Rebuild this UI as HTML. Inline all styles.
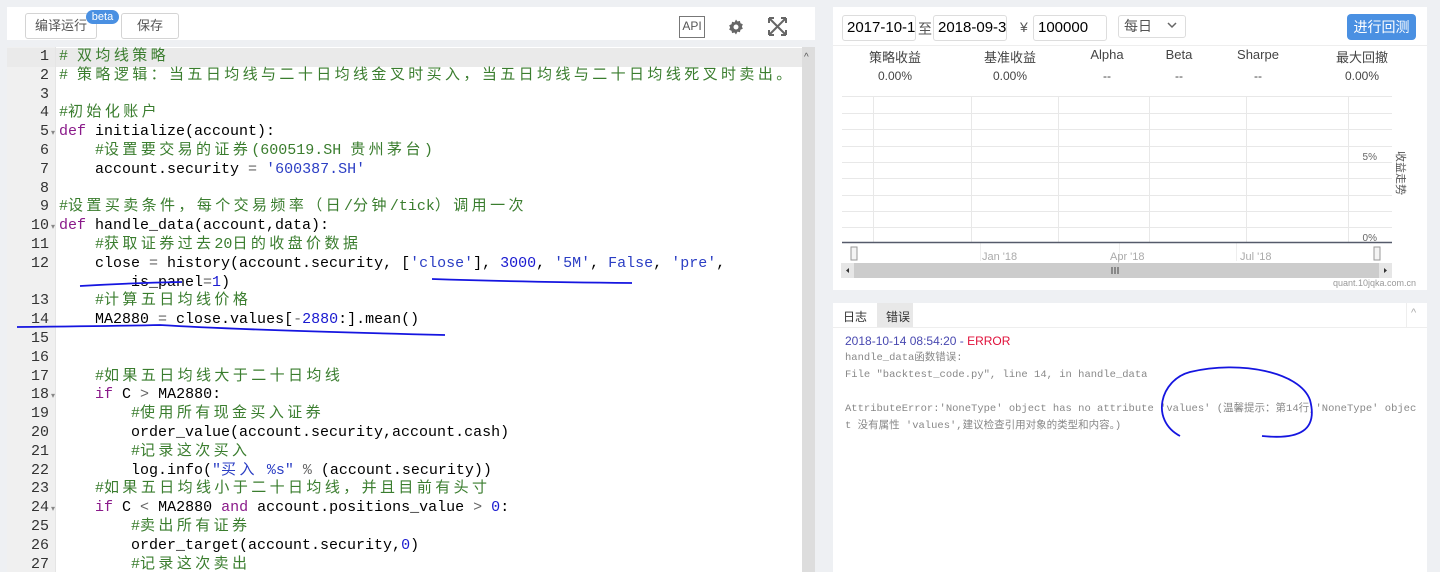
<!DOCTYPE html>
<html><head><meta charset="utf-8"><style>
*{margin:0;padding:0;box-sizing:border-box}
body{width:1440px;height:572px;background:#eef0f3;position:relative;overflow:hidden;font-family:"Liberation Sans","Noto Sans CJK SC",sans-serif}
.a{position:absolute}
.btn{position:absolute;top:13px;height:26px;border:1px solid #d4d4d4;border-radius:3px;background:#fff;font-size:13px;color:#555;text-align:center;line-height:24px;white-space:nowrap}
#ed{position:absolute;left:7px;top:47px;width:808px;height:525px;background:#fff;overflow:hidden}
#gut{position:absolute;left:0;top:0;width:48px;height:525px;background:#f0f0f0}
.ln{position:absolute;left:0;width:42px;text-align:right;font:15px/18.8px "Liberation Mono",monospace;color:#333;height:18.8px}
.cl{position:absolute;left:52px;font:15px/18.8px "Liberation Mono","Noto Sans CJK SC",monospace;color:#000;white-space:pre;height:18.8px}
.cl span{line-height:18.8px}
.c{color:#3a7d2e}.k{color:#8a1a8a}.s{color:#2b3ec4}.n{color:#1a1ad0}.o{color:#666}
.z{letter-spacing:3.4px;font-size:15px}
.fold{position:absolute;left:44px;font-size:8px;color:#888}
</style></head><body>
<div class="a" style="left:7px;top:7px;width:808px;height:33px;background:#fff"></div>
<div class="btn" style="left:25px;width:72px">编译运行</div>
<div class="a" style="left:86px;top:10px;width:33px;height:14px;background:#4a90e2;border-radius:7px;color:#fff;font-size:11px;text-align:center;line-height:14px">beta</div>
<div class="btn" style="left:121px;width:58px">保存</div>
<div class="a" style="left:679px;top:16px;width:26px;height:22px;border:1.5px solid #777;font-size:12px;color:#555;text-align:center;line-height:19px">API</div>
<svg class="a" style="left:727px;top:18px" width="18" height="18" viewBox="0 0 18 18"><path d="M9 1.5l1.5 2 2.4-.6.6 2.4 2.3 1-.9 2.3.9 2.2-2.3 1-.6 2.4-2.4-.6L9 16.5l-1.5-2-2.4.6-.6-2.4-2.3-1 .9-2.2-.9-2.3 2.3-1 .6-2.4 2.4.6z" fill="#666"/><circle cx="9" cy="9" r="2.5" fill="#fff"/></svg>
<svg class="a" style="left:767px;top:16px" width="21" height="21" viewBox="0 0 21 21" fill="none" stroke="#666" stroke-width="2"><path d="M3 3l15 15M18 3L3 18M2 2h5M2 2v5M19 2h-5M19 2v5M2 19h5M2 19v-5M19 19h-5M19 19v-5"/></svg>

<div id="ed">
<div id="gut"></div>
<div class="a" style="left:0;top:1px;width:795px;height:19px;background:#eaeaea"></div>
<div class="a" style="left:795px;top:0;width:13px;height:525px;background:#ddd"></div>
<div class="a" style="left:797px;top:5px;font-size:10px;color:#555">^</div>
<div class="a" style="left:48px;top:0;width:1px;height:525px;background:#e5e5e5"></div>
<div style="position:absolute;left:0;top:1px">
<div class="ln" style="top:0">1</div><div class="cl c" style="top:0"># <span class="z">双均线策略</span></div>
<div class="ln" style="top:18.8px">2</div><div class="cl c" style="top:18.8px"># <span class="z">策略逻辑：当五日均线与二十日均线金叉时买入，当五日均线与二十日均线死叉时卖出。</span></div>
<div class="ln" style="top:37.6px">3</div>
<div class="ln" style="top:56.4px">4</div><div class="cl c" style="top:56.4px">#<span class="z">初始化账户</span></div>
<div class="ln" style="top:75.2px">5</div><div class="fold" style="top:80px">▾</div><div class="cl" style="top:75.2px"><span class="k">def</span> initialize(account):</div>
<div class="ln" style="top:94px">6</div><div class="cl c" style="top:94px">    #<span class="z">设置要交易的证券</span>(600519.SH <span class="z">贵州茅台</span>)</div>
<div class="ln" style="top:112.8px">7</div><div class="cl" style="top:112.8px">    account.security <span class="o">=</span> <span class="s">'600387.SH'</span></div>
<div class="ln" style="top:131.6px">8</div>
<div class="ln" style="top:150.4px">9</div><div class="cl c" style="top:150.4px">#<span class="z">设置买卖条件，每个交易频率（日</span>/<span class="z">分钟</span>/tick<span class="z">）调用一次</span></div>
<div class="ln" style="top:169.2px">10</div><div class="fold" style="top:174px">▾</div><div class="cl" style="top:169.2px"><span class="k">def</span> handle_data(account,data):</div>
<div class="ln" style="top:188px">11</div><div class="cl c" style="top:188px">    #<span class="z">获取证券过去</span>20<span class="z">日的收盘价数据</span></div>
<div class="ln" style="top:206.8px">12</div><div class="cl" style="top:206.8px">    close <span class="o">=</span> history(account.security, [<span class="s">'close'</span>], <span class="n">3000</span>, <span class="s">'5M'</span>, <span class="s">False</span>, <span class="s">'pre'</span>,</div>
<div class="cl" style="top:225.6px">        is_panel<span class="o">=</span><span class="n">1</span>)</div>
<div class="ln" style="top:244.4px">13</div><div class="cl c" style="top:244.4px">    #<span class="z">计算五日均线价格</span></div>
<div class="ln" style="top:263.2px">14</div><div class="cl" style="top:263.2px">    MA2880 <span class="o">=</span> close.values[<span class="o">-</span><span class="n">2880</span>:].mean()</div>
<div class="ln" style="top:282px">15</div>
<div class="ln" style="top:300.8px">16</div>
<div class="ln" style="top:319.6px">17</div><div class="cl c" style="top:319.6px">    #<span class="z">如果五日均线大于二十日均线</span></div>
<div class="ln" style="top:338.4px">18</div><div class="fold" style="top:343px">▾</div><div class="cl" style="top:338.4px">    <span class="k">if</span> C <span class="o">&gt;</span> MA2880:</div>
<div class="ln" style="top:357.2px">19</div><div class="cl c" style="top:357.2px">        #<span class="z">使用所有现金买入证券</span></div>
<div class="ln" style="top:376px">20</div><div class="cl" style="top:376px">        order_value(account.security,account.cash)</div>
<div class="ln" style="top:394.8px">21</div><div class="cl c" style="top:394.8px">        #<span class="z">记录这次买入</span></div>
<div class="ln" style="top:413.6px">22</div><div class="cl" style="top:413.6px">        log.info(<span class="s">"<span class="z">买入</span> %s"</span> <span class="o">%</span> (account.security))</div>
<div class="ln" style="top:432.4px">23</div><div class="cl c" style="top:432.4px">    #<span class="z">如果五日均线小于二十日均线，并且目前有头寸</span></div>
<div class="ln" style="top:451.2px">24</div><div class="fold" style="top:456px">▾</div><div class="cl" style="top:451.2px">    <span class="k">if</span> C <span class="o">&lt;</span> MA2880 <span class="k">and</span> account.positions_value <span class="o">&gt;</span> <span class="n">0</span>:</div>
<div class="ln" style="top:470px">25</div><div class="cl c" style="top:470px">        #<span class="z">卖出所有证券</span></div>
<div class="ln" style="top:488.8px">26</div><div class="cl" style="top:488.8px">        order_target(account.security,<span class="n">0</span>)</div>
<div class="ln" style="top:507.6px">27</div><div class="cl c" style="top:507.6px">        #<span class="z">记录这次卖出</span></div>
</div>
</div>

<!-- right top panel -->
<div class="a" style="left:833px;top:7px;width:594px;height:283px;background:#fff"></div>
<div class="a" style="left:833px;top:45px;width:594px;height:1px;background:#eee"></div>
<div class="a" style="left:842px;top:15px;width:74px;height:26px;border:1px solid #ddd;border-radius:3px;font-size:15px;line-height:24px;padding-left:4px;overflow:hidden;white-space:nowrap">2017-10-1</div>
<div class="a" style="left:918px;top:19px;font-size:14px;color:#555">至</div>
<div class="a" style="left:933px;top:15px;width:74px;height:26px;border:1px solid #ddd;border-radius:3px;font-size:15px;line-height:24px;padding-left:4px;overflow:hidden;white-space:nowrap">2018-09-30</div>
<div class="a" style="left:1020px;top:19px;font-size:14px;color:#555">¥</div>
<div class="a" style="left:1033px;top:15px;width:74px;height:26px;border:1px solid #ddd;border-radius:3px;font-size:15px;line-height:24px;padding-left:4px">100000</div>
<div class="a" style="left:1118px;top:15px;width:68px;height:23px;border:1px solid #ddd;border-radius:3px;font-size:14px;line-height:21px;padding-left:5px;color:#555">每日</div>
<svg class="a" style="left:1167px;top:22px" width="10" height="7"><path d="M1 1l4 4 4-4" stroke="#666" stroke-width="1.5" fill="none"/></svg>
<div class="a" style="left:1347px;top:14px;width:69px;height:26px;background:#4a90e2;border-radius:4px;color:#fff;font-size:14px;text-align:center;line-height:26px">进行回测</div>
<div class="a" style="font-size:13px;color:#444;top:47px;left:0;width:1440px;height:40px">
<div class="a" style="left:855px;width:80px;text-align:center">策略收益</div><div class="a" style="left:855px;top:22px;width:80px;text-align:center;font-size:12px">0.00%</div>
<div class="a" style="left:970px;width:80px;text-align:center">基准收益</div><div class="a" style="left:970px;top:22px;width:80px;text-align:center;font-size:12px">0.00%</div>
<div class="a" style="left:1067px;width:80px;text-align:center">Alpha</div><div class="a" style="left:1067px;top:22px;width:80px;text-align:center;font-size:12px">--</div>
<div class="a" style="left:1139px;width:80px;text-align:center">Beta</div><div class="a" style="left:1139px;top:22px;width:80px;text-align:center;font-size:12px">--</div>
<div class="a" style="left:1218px;width:80px;text-align:center">Sharpe</div><div class="a" style="left:1218px;top:22px;width:80px;text-align:center;font-size:12px">--</div>
<div class="a" style="left:1322px;width:80px;text-align:center">最大回撤</div><div class="a" style="left:1322px;top:22px;width:80px;text-align:center;font-size:12px">0.00%</div>
</div>
<svg class="a" style="left:840px;top:90px" width="560" height="200">
<g stroke="#e8e8e8" stroke-width="1"><path d="M2 6.5h550M2 23.5h550M2 39.5h550M2 56.5h550M2 72.5h550M2 88.5h550M2 105.5h550M2 121.5h550M2 137.5h550"/>
<path d="M33.5 6v146M131.5 6v146M218.5 6v146M309.5 6v146M406.5 6v146M508.5 6v146"/>
<path d="M140.5 153v18M279.5 153v18M396.5 153v18" stroke="#eee"/></g>
<path d="M2 152.5h550" stroke="#555a6a" stroke-width="1.5"/>
<text x="537" y="70" font-size="10" fill="#666" text-anchor="end" font-family="Liberation Sans">5%</text>
<text x="537" y="151" font-size="10" fill="#666" text-anchor="end" font-family="Liberation Sans">0%</text>
<text x="142" y="170" font-size="11" fill="#aaa" font-family="Liberation Sans">Jan '18</text>
<text x="270" y="170" font-size="11" fill="#aaa" font-family="Liberation Sans">Apr '18</text>
<text x="400" y="170" font-size="11" fill="#aaa" font-family="Liberation Sans">Jul '18</text>
<rect x="11" y="157" width="6" height="13" fill="#f4f4f4" stroke="#999"/><rect x="534" y="157" width="6" height="13" fill="#f4f4f4" stroke="#999"/>
<rect x="1" y="173" width="551" height="15" fill="#ccc"/><rect x="1" y="173" width="13" height="15" fill="#e6e6e6"/><rect x="539" y="173" width="13" height="15" fill="#e6e6e6"/>
<path d="M9 178v5l-3-2.5zM544 178v5l3-2.5z" fill="#333"/>
<path d="M272 177v7M275 177v7M278 177v7" stroke="#444"/>
</svg>
<div class="a" style="left:1377px;top:165px;width:48px;font-size:11px;color:#555;transform:rotate(90deg);text-align:center">收益走势</div>
<div class="a" style="left:1300px;top:278px;width:116px;text-align:right;font-size:9px;color:#999">quant.10jqka.com.cn</div>

<!-- log panel -->
<div class="a" style="left:833px;top:303px;width:594px;height:269px;background:#fff"></div>
<div class="a" style="left:833px;top:327px;width:594px;height:1px;background:#eee"></div>
<div class="a" style="left:877px;top:303px;width:36px;height:24px;background:#e8e8e8"></div>
<div class="a" style="left:843px;top:308px;font-size:12px;color:#333">日志</div>
<div class="a" style="left:886px;top:308px;font-size:12px;color:#333">错误</div>
<div class="a" style="left:1406px;top:303px;width:1px;height:24px;background:#eee"></div>
<div class="a" style="left:1411px;top:307px;font-size:11px;color:#aaa">^</div>
<div class="a" style="left:845px;top:334px;font-size:12px;color:#4848b0">2018-10-14 08:54:20 - <span style="color:#e0103a">ERROR</span></div>
<div class="a" style="left:845px;top:350px;font:10.5px/17px 'Liberation Mono','Noto Sans CJK SC',monospace;color:#888;white-space:pre">handle_data函数错误:
File "backtest_code.py", line 14, in handle_data

AttributeError:'NoneType' object has no attribute 'values' (温馨提示：第14行,'NoneType' objec
t 没有属性 'values',建议检查引用对象的类型和内容。)</div>

<!-- annotations -->
<svg class="a" style="left:0;top:0" width="1440" height="572" fill="none" stroke="#1515e0" stroke-width="1.8">
<path d="M80 286 Q130 283 182 282"/>
<path d="M432 279 Q520 282 632 283"/>
<path d="M17 327 Q120 326 160 325 Q240 330 445 335"/>
<path d="M1180 436 C1150 420 1160 380 1190 372 C1240 360 1300 372 1310 400 C1318 430 1300 440 1262 436"/>
</svg>
</body></html>
